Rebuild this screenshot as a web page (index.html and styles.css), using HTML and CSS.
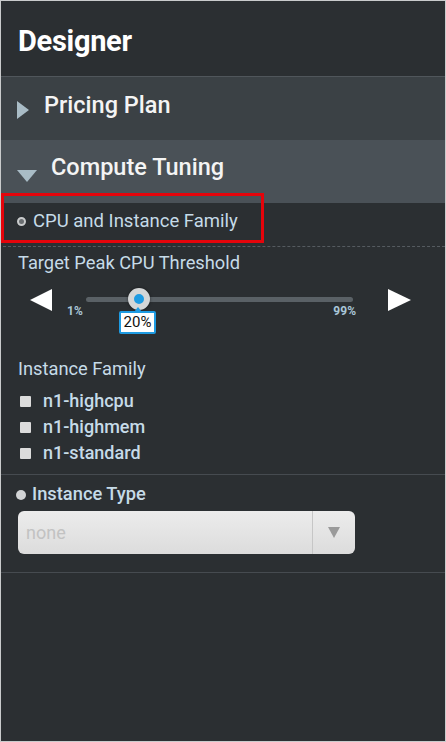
FILE: index.html
```html
<!DOCTYPE html>
<html>
<head>
<meta charset="utf-8">
<link rel="stylesheet" href="styles.css">
</head>
<body>
<div class="panel">
  <div class="header">Designer</div>
  <div class="acc acc-closed">
    <svg class="tri-right" width="12" height="18" viewBox="0 0 12 18"><polygon points="0,0 12,9 0,18" fill="#a9bcc6"/></svg>
    <span>Pricing Plan</span>
  </div>
  <div class="acc acc-open">
    <svg class="tri-down" width="20" height="12" viewBox="0 0 20 12"><polygon points="0,0 20,0 10,12" fill="#a9bcc6"/></svg>
    <span>Compute Tuning</span>
  </div>
  <div class="section-head">
    <span class="radio radio-ring"></span>
    <span>CPU and Instance Family</span>
  </div>
  <div class="group">
    <div class="label">Target Peak CPU Threshold</div>
    <div class="slider-row">
      <svg width="22" height="22" viewBox="0 0 22 22"><polygon points="22,0 22,22 0,11" fill="#fff"/></svg>
      <div class="slider">
        <div class="track"></div>
        <div class="thumb"></div>
        <span class="min">1%</span>
        <span class="max">99%</span>
        <span class="tip">20%</span>
      </div>
      <svg width="23" height="22" viewBox="0 0 23 22"><polygon points="0,0 23,11 0,22" fill="#fff"/></svg>
    </div>
    <div class="label label-family">Instance Family</div>
    <ul class="checks">
      <li><span class="box"></span>n1-highcpu</li>
      <li><span class="box"></span>n1-highmem</li>
      <li><span class="box"></span>n1-standard</li>
    </ul>
  </div>
  <div class="group group-type">
    <div class="type-head"><span class="radio radio-fill"></span><span>Instance Type</span></div>
    <div class="select">
      <span class="select-text">none</span>
      <span class="select-btn"><svg width="12" height="11" viewBox="0 0 12 11"><polygon points="0,0 12,0 6,11" fill="#9a9a9a"/></svg></span>
    </div>
  </div>
  <div class="highlight"></div>
</div>
</body>
</html>
```
FILE: styles.css
```css
html, body {
  margin: 0;
  padding: 0;
  background: #2b2f32;
}
.panel {
  position: relative;
  width: 446px;
  height: 742px;
  box-sizing: border-box;
  border: 1px solid #c9cbcc;
  background: #2b2f32;
  font-family: Roboto, "Liberation Sans", sans-serif;
  color: #c6dbe8;
  overflow: hidden;
}
.header {
  box-sizing: border-box;
  height: 76px;
  padding-top: 5px;
  border-bottom: 1px solid #50565b;
  display: flex;
  align-items: center;
  padding-left: 17px;
  font-size: 29px;
  font-weight: 700;
  color: #ffffff;
  letter-spacing: -0.3px;
}
.acc {
  height: 63px;
  display: flex;
  align-items: center;
  color: #f4f4f4;
  font-size: 23.5px;
  font-weight: 500;
}
.acc-closed {
  background: #3b4145;
  padding-left: 16px;
  gap: 15px;
}
.acc-closed span { margin-top: -8px; }
.acc-closed .tri-right { margin-top: 2px; }
.acc-open {
  background: #4a5157;
  padding-left: 16px;
  gap: 14px;
}
.acc-open span { margin-top: -9px; }
.tri-down { margin-top: 8px; }
.section-head {
  height: 43px;
  border-bottom: 1px dashed #555b60;
  display: flex;
  align-items: center;
  gap: 7px;
  font-size: 18.5px;
  margin-left: 2px;
  padding-left: 14px;
}
.section-head span:last-child { margin-top: -7px; }
.section-head .radio { margin-top: -6px; }
.radio {
  width: 9px;
  height: 9px;
  border-radius: 50%;
  box-sizing: border-box;
  display: inline-block;
}
.radio-ring {
  background: #6a6e71;
  border: 2px solid #c9cbcc;
}
.radio-fill {
  width: 10px;
  height: 10px;
  background: #d2d4d5;
}
.group {
  padding: 5px 0 9px 17px;
  border-bottom: 1px solid #464b50;
}
.label {
  font-size: 18.3px;
  line-height: 22px;
}
.slider-row {
  display: flex;
  align-items: center;
  margin-top: 15px;
  padding-left: 12px;
  height: 22px;
}
.slider {
  position: relative;
  width: 267px;
  height: 22px;
  margin: 0 35px 0 34px;
}
.track {
  position: absolute;
  left: 0;
  right: 0;
  top: 8px;
  height: 5px;
  border-radius: 3px;
  background: #5a6166;
}
.thumb {
  position: absolute;
  left: 42px;
  top: -1px;
  width: 22px;
  height: 22px;
  box-sizing: border-box;
  border-radius: 50%;
  background: #1e9be2;
  border: 6px solid #d4d6d7;
  box-shadow: 0 0 3px rgba(0,0,0,0.5);
}
.min, .max {
  position: absolute;
  top: 15px;
  font-size: 12px;
  font-weight: 700;
  color: #a9c6d8;
}
.min { left: -19px; }
.max { right: -3px; }
.tip {
  position: absolute;
  left: 33px;
  top: 22px;
  width: 37px;
  height: 23px;
  box-sizing: border-box;
  background: #fff;
  border: 2px solid #1e9be2;
  border-radius: 2px;
  color: #111;
  font-size: 15px;
  text-align: center;
  line-height: 19px;
}
.tip::before {
  content: "";
  position: absolute;
  left: 13px;
  top: -6px;
  border-left: 4px solid transparent;
  border-right: 4px solid transparent;
  border-bottom: 5px solid #1e9be2;
}
.label-family {
  margin-top: 47px;
}
.checks {
  list-style: none;
  margin: 7px 0 0 0;
  padding: 0;
}
.checks li {
  display: flex;
  align-items: center;
  height: 26px;
  font-size: 18px;
  font-weight: 500;
  color: #c6dbe8;
  gap: 12px;
  padding-left: 2px;
}
.box {
  width: 11px;
  height: 11px;
  background: #dcdcdc;
  border-radius: 1px;
  margin-top: 2px;
}
.group-type {
  padding-top: 8px;
  padding-bottom: 18px;
}
.type-head {
  display: flex;
  align-items: center;
  gap: 6px;
  font-size: 18.3px;
  font-weight: 500;
  margin-left: -2px;
}
.type-head .radio { margin-top: 3px; }
.select {
  margin-top: 7px;
  width: 337px;
  height: 43px;
  box-sizing: border-box;
  border-radius: 6px;
  background: linear-gradient(#ececec, #dcdcdc);
  display: flex;
  align-items: center;
}
.select-text {
  flex: 1;
  padding-left: 8px;
  font-size: 18px;
  color: #c2c2c2;
}
.select-btn {
  width: 42px;
  height: 43px;
  border-left: 1px solid #c6c6c6;
  display: flex;
  align-items: center;
  justify-content: center;
}
.highlight {
  position: absolute;
  left: 0;
  top: 192px;
  width: 263px;
  height: 50px;
  box-sizing: border-box;
  border: 3px solid #e5040b;
}
```
